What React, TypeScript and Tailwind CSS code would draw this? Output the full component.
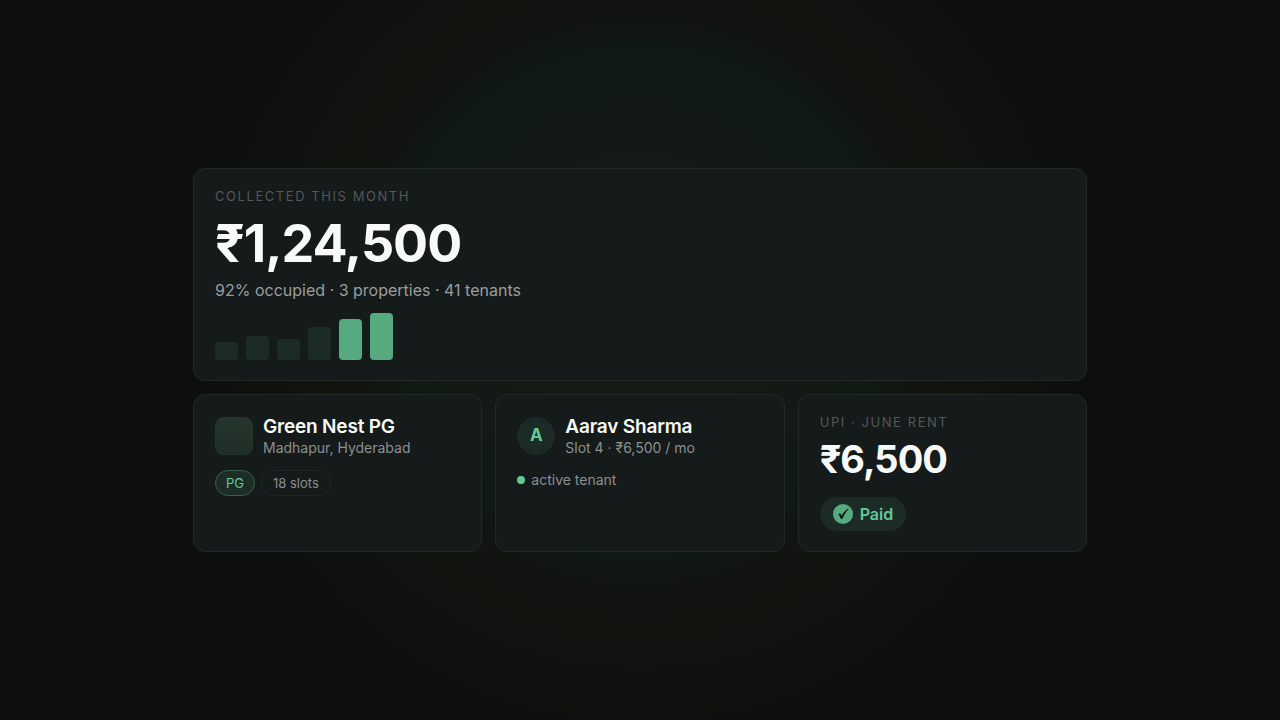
import { clsx } from 'clsx'
import type { ReactNode } from 'react'

interface Bar {
  month: string
  height: number
  active?: boolean
}

const bars: Bar[] = [
  { month: 'Jan', height: 18 },
  { month: 'Feb', height: 24 },
  { month: 'Mar', height: 21 },
  { month: 'Apr', height: 33 },
  { month: 'May', height: 41, active: true },
  { month: 'Jun', height: 47, active: true },
]

function Card({ className, children }: { className?: string; children: ReactNode }) {
  return (
    <section className={clsx('rounded-xl border border-[#222927] bg-[#151a1a] px-[21px] py-5', className)}>
      {children}
    </section>
  )
}

function Label({ children }: { children: ReactNode }) {
  return <p className="text-[13px] leading-[14px] tracking-[0.12em] text-[#545858] uppercase">{children}</p>
}

function CardHeader({ icon, title, subtitle }: { icon: ReactNode; title: string; subtitle: string }) {
  return (
    <div className="flex items-center gap-[10px]">
      {icon}
      <div>
        <h2 className="text-[19px] leading-6 font-semibold tracking-[-0.01em] text-[#f8faf9]">{title}</h2>
        <p className="text-sm leading-[18px] text-[#8c9090]">{subtitle}</p>
      </div>
    </div>
  )
}

export default function App() {
  return (
    <main className="flex min-h-screen items-center justify-center bg-[#0c0f0e] bg-[radial-gradient(circle_460px_at_50%_42%,#151b17_0%,#131a16_42%,#101913_50%,#101813_57%,#121410_64%,#10120f_84%,#0c0f0e_96%)] font-['Inter',sans-serif]">
      <div className="grid w-full max-w-[894px] grid-cols-3 gap-[13px]">
        <Card className="col-span-3">
          <Label>Collected this month</Label>
          <p className="mt-[13px] text-[52px] leading-14 font-bold tracking-[-1px] text-[#f8faf9]">₹1,24,500</p>
          <p className="mt-2 text-base leading-5 text-[#9a9e9d]">92% occupied · 3 properties · 41 tenants</p>
          <div className="mt-[13px] flex h-[47px] items-end gap-2">
            {bars.map((bar) => (
              <div
                key={bar.month}
                className={clsx('w-[23px] rounded', bar.active ? 'bg-[#55aa80]' : 'bg-[#1d2b26]')}
                style={{ height: bar.height }}
              />
            ))}
          </div>
        </Card>

        <Card>
          <CardHeader
            icon={<div className="size-[38px] rounded-lg border border-[#25322b] bg-linear-to-b from-[#24352b] to-[#203028]" />}
            title="Green Nest PG"
            subtitle="Madhapur, Hyderabad"
          />
          <div className="mt-[13px] flex gap-[6px] text-[13px] leading-4">
            <span className="rounded-full border border-[#336149] bg-[#1d2c26] px-[10px] py-1 text-[#61cb95]">PG</span>
            <span className="rounded-full border border-[#202625] px-[11px] py-1 text-[#8c9090]">18 slots</span>
          </div>
        </Card>

        <Card>
          <CardHeader
            icon={
              <div className="flex size-[38px] items-center justify-center rounded-full bg-[#1d2b26] text-[17px] font-bold text-[#61cb95]">
                A
              </div>
            }
            title="Aarav Sharma"
            subtitle="Slot 4 · ₹6,500 / mo"
          />
          <p className="mt-[13px] flex items-center gap-[6px] text-sm leading-5 text-[#8c9090]">
            <span className="size-2 rounded-full bg-[#61cb95]" />
            active tenant
          </p>
        </Card>

        <Card>
          <Label>UPI · June rent</Label>
          <p className="mt-2 text-[38px] leading-11 font-bold tracking-[-1px] text-[#f8faf9]">₹6,500</p>
          <div className="mt-4 flex h-[34px] w-fit items-center gap-[7px] rounded-full bg-[#1d2b26] px-[13px] text-base font-semibold text-[#61cb95]">
            <svg viewBox="0 0 20 20" className="size-5" aria-hidden="true">
              <circle cx="10" cy="10" r="10" fill="#55aa80" />
              <path d="M5.2 10.2 L7.1 9.2 L8.7 11.7 C10.3 8.7 12.2 6.4 15 4.5 L15.6 5.1 C13 7.6 11.2 10.8 9.6 14.5 L7.8 15 C7.2 13.1 6.6 11.6 5.2 10.2Z" fill="#101716" />
            </svg>
            Paid
          </div>
        </Card>
      </div>
    </main>
  )
}
